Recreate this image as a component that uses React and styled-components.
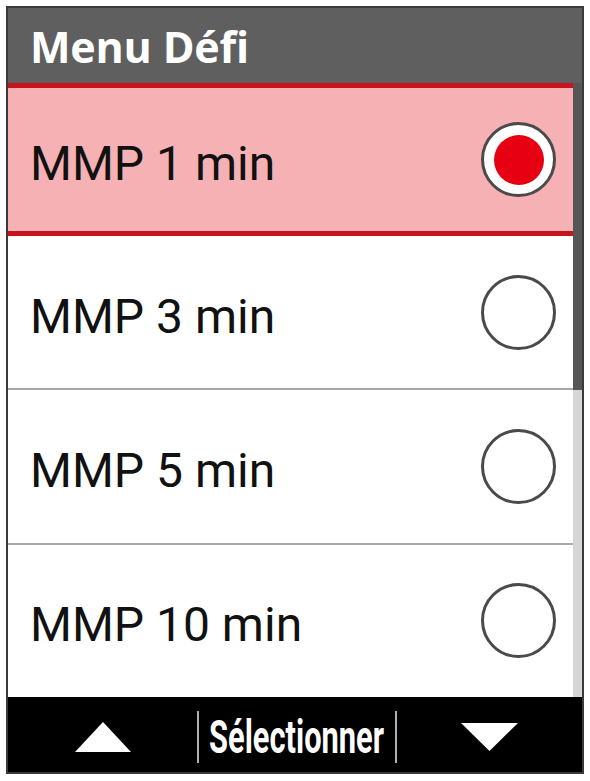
import React from 'react'
import styled, {createGlobalStyle} from 'styled-components'

const GlobalStyle = createGlobalStyle`
  html, body {
    margin: 0;
    padding: 0;
    background: #fff;
  }
  body {
    font-family: Roboto, "Liberation Sans", sans-serif;
  }
`

const items = ['MMP 1 min', 'MMP 3 min', 'MMP 5 min', 'MMP 10 min']

export default function App() {
  const selected = 0
  return (
    <Page>
      <GlobalStyle />
      <Device>
        <Header>Menu Défi</Header>
        <ListArea>
          <Rows>
            {items.map((label, i) => (
              <Row
                key={label}
                $selected={i === selected}
                $divider={i > 0 && i - 1 !== selected}
              >
                <Label>{label}</Label>
                <Radio $checked={i === selected}>
                  {i === selected && <Dot />}
                </Radio>
              </Row>
            ))}
          </Rows>
          <Scrollbar>
            <Thumb />
          </Scrollbar>
        </ListArea>
        <Footer>
          <Cell $w="189px">
            <svg width="56" height="30" viewBox="0 0 56 30">
              <polygon points="28,0 56,30 0,30" fill="#fff" />
            </svg>
          </Cell>
          <Divider />
          <Cell $w="196px">
            <Action>Sélectionner</Action>
          </Cell>
          <Divider />
          <Cell $w="auto" $grow>
            <svg width="57" height="28" viewBox="0 0 57 28">
              <polygon points="0,0 57,0 28.5,28" fill="#fff" />
            </svg>
          </Cell>
        </Footer>
      </Device>
    </Page>
  )
}

//---------------------------------------------------------------------
const Page = styled.div`
  padding: 6px 0 0 6px;
`

const Device = styled.div`
  width: 578px;
  height: 768px;
  box-sizing: border-box;
  border: 2px solid #3a3a3a;
  display: flex;
  flex-direction: column;
  background: #fff;
`

const Header = styled.div`
  height: 75px;
  flex: none;
  background: #5f5f5f;
  color: #fff;
  font-family: "Open Sans", Roboto, sans-serif;
  font-weight: 700;
  font-size: 43px;
  letter-spacing: -0.2px;
  display: flex;
  align-items: center;
  padding: 2px 0 0 22px;
  box-sizing: border-box;
`

const ListArea = styled.div`
  height: 614px;
  flex: none;
  display: flex;
`

const Rows = styled.div`
  flex: 1;
  display: flex;
  flex-direction: column;
`

const Row = styled.div`
  box-sizing: border-box;
  display: flex;
  align-items: center;
  justify-content: space-between;
  padding: 0 17px 0 22px;
  background: ${p => (p.$selected ? '#f5b1b3' : '#fff')};
  border-top: ${p =>
    p.$selected ? '5px solid #c8141c' : p.$divider ? '2px solid #a8a8a8' : 'none'};
  border-bottom: ${p => (p.$selected ? '5px solid #c8141c' : 'none')};
  flex: ${p => (p.$selected ? '0 0 153px' : '1 1 0')};
`

const Label = styled.span`
  font-size: 48px;
  color: #111;
  margin-top: 8px;
`

const Radio = styled.div`
  width: 75px;
  height: 75px;
  box-sizing: border-box;
  border-radius: 50%;
  border: 3px solid #4a4a4a;
  background: #fff;
  display: flex;
  align-items: center;
  justify-content: center;
`

const Dot = styled.div`
  width: 50px;
  height: 50px;
  border-radius: 50%;
  background: #e60012;
`

const Scrollbar = styled.div`
  width: 9px;
  flex: none;
  background: #d6d6d6;
`

const Thumb = styled.div`
  height: 307px;
  background: #565656;
`

const Footer = styled.div`
  flex: 1;
  background: #000;
  display: flex;
  align-items: center;
`

const Cell = styled.div`
  width: ${p => p.$w};
  flex: ${p => (p.$grow ? 1 : 'none')};
  display: flex;
  align-items: center;
  justify-content: center;
  padding-top: 4px;
`

const Divider = styled.div`
  width: 2px;
  height: 52px;
  background: #b0b0b0;
  margin-top: 4px;
`

const Action = styled.span`
  display: inline-block;
  color: #fff;
  font-weight: 700;
  font-size: 46px;
  transform: scaleX(0.67);
  white-space: nowrap;
`
